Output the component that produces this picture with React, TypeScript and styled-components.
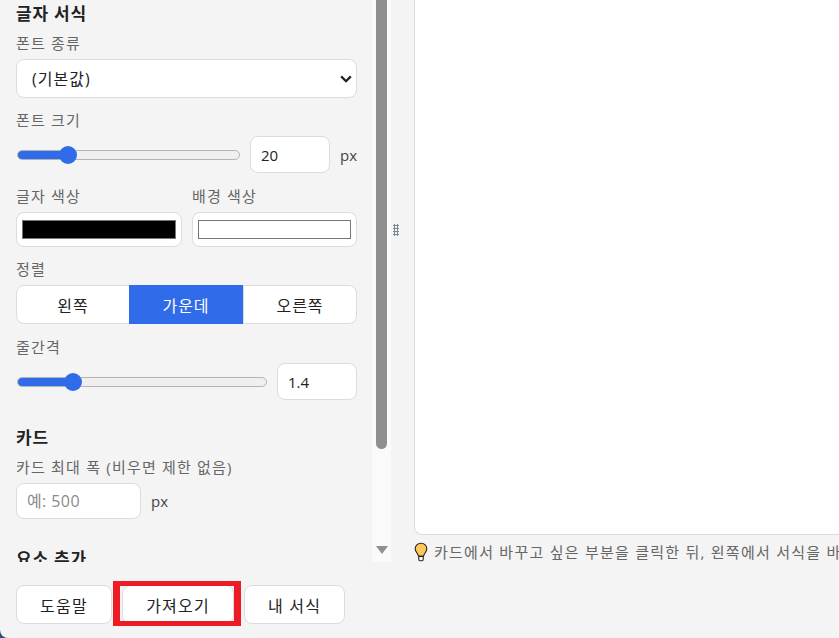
import styled, { createGlobalStyle } from 'styled-components';

const GlobalStyle = createGlobalStyle`
	html, body, #root {
		height: 100%;
		margin: 0;
	}

	body {
		overflow: hidden;
		background: #2d5078;
		color: #222;
		font-family: "Open Sans", "Noto Sans CJK KR", sans-serif;
		font-size: 15px;
	}

	* {
		box-sizing: border-box;
	}
`;

const Page = styled.div`
	display: flex;
	height: 638px;
	width: 839px;
	overflow: hidden;
	background: #f4f4f4;
	border-bottom-left-radius: 8px;
`;

const Sidebar = styled.aside`
	flex: 0 0 391px;
	display: flex;
	flex-direction: column;
`;

const ScrollArea = styled.div`
	flex: 0 0 562px;
	display: flex;
	overflow: hidden;
`;

const Panel = styled.div`
	flex: 1;
	min-width: 0;
	padding: 4px 15px 0 16px;
	overflow: hidden;
`;

const Track = styled.div`
	flex: 0 0 19px;
	display: flex;
	flex-direction: column;
	justify-content: space-between;
	align-items: center;
	background: #fafafa;
	padding-bottom: 8px;
`;

const Thumb = styled.div`
	width: 11px;
	height: 449px;
	background: #8f8f8f;
	border-radius: 0 0 6px 6px;
`;

const ArrowDown = styled.div`
	width: 0;
	height: 0;
	border-left: 6.5px solid transparent;
	border-right: 6.5px solid transparent;
	border-top: 8px solid #8f8f8f;
`;

const SectionTitle = styled.h3`
	margin: 0;
	font-size: 17px;
	line-height: 20px;
	font-weight: 700;
	letter-spacing: 0.8px;
	color: #222;
`;

const Field = styled.div<{ $top?: number }>`
	margin-top: ${(props) => props.$top ?? 12}px;
`;

const Label = styled.label`
	display: block;
	font-size: 15px;
	line-height: 20px;
	letter-spacing: 1.2px;
	color: #666;
	margin-bottom: 6px;
`;

const SelectWrap = styled.div`
	position: relative;

	svg {
		position: absolute;
		top: 16px;
		right: 5px;
		pointer-events: none;
	}
`;

const Select = styled.select`
	display: block;
	width: 100%;
	height: 39px;
	padding: 0 15px;
	appearance: none;
	border: 1px solid #dcdcdc;
	border-radius: 8px;
	background: #fff;
	color: #222;
	font: inherit;
	font-size: 16px;
	letter-spacing: 1px;
`;

const Row = styled.div<{ $gap?: number }>`
	display: flex;
	align-items: center;
	gap: ${(props) => props.$gap ?? 10}px;
`;

const Range = styled.input<{ $fill: number }>`
	flex: 1;
	min-width: 0;
	height: 18px;
	margin: 0 0 0 1px;
	appearance: none;
	background: transparent;

	&::-webkit-slider-runnable-track {
		height: 10px;
		border-radius: 5px;
		border: 1px solid #b4b4b4;
		background: linear-gradient(
			to right,
			#306cea ${(props) => props.$fill}px,
			#efefef ${(props) => props.$fill}px
		);
	}

	&::-webkit-slider-thumb {
		appearance: none;
		width: 18px;
		height: 18px;
		margin-top: -5px;
		border-radius: 50%;
		background: #306cea;
		border: 0;
	}
`;

const NumberInput = styled.input<{ $width: number; $height?: number }>`
	flex: 0 0 ${(props) => props.$width}px;
	width: ${(props) => props.$width}px;
	height: ${(props) => props.$height ?? 37}px;
	padding: 0 10px;
	border: 1px solid #dcdcdc;
	border-radius: 8px;
	background: #fff;
	color: #222;
	font: inherit;
	font-size: 15px;

	&::placeholder {
		color: #8a8a8a;
		font-size: 16px;
		letter-spacing: 0.4px;
	}
`;

const Unit = styled.span`
	font-size: 15px;
	color: #444;
`;

const ColorGrid = styled.div`
	display: grid;
	grid-template-columns: 166px 165px;
	gap: 10px;
	margin-top: 13px;
`;

const ColorBox = styled.div`
	height: 35px;
	padding: 7px 5px;
	border: 1px solid #dcdcdc;
	border-radius: 8px;
	background: #fff;
`;

const ColorSwatch = styled.div<{ $color: string }>`
	height: 19px;
	border: 1px solid #767676;
	background: ${(props) => props.$color};
`;

const Segments = styled.div`
	display: flex;
	height: 39px;
	border: 1px solid #dcdcdc;
	border-radius: 8px;
	background: #fff;
`;

const Segment = styled.button<{ $active?: boolean; $width: number }>`
	flex: ${(props) => (props.$width ? `0 0 ${props.$width}px` : '1')};
	margin: ${(props) => (props.$active ? '-1px 0' : '0')};
	padding: 0;
	border: 0;
	border-right: ${(props) => (props.$active ? '1px solid #dcdcdc' : '0')};
	background: ${(props) => (props.$active ? '#306cea' : 'transparent')};
	color: ${(props) => (props.$active ? '#fff' : '#222')};
	font: inherit;
	font-size: 16px;
	letter-spacing: 1px;
`;

const Section = styled.section<{ $top: number }>`
	margin-top: ${(props) => props.$top}px;
`;

const Footer = styled.footer`
	display: flex;
	align-items: flex-start;
	padding: 23px 0 0 16px;
`;

const FooterButton = styled.button<{ $width: number; $left?: number }>`
	width: ${(props) => props.$width}px;
	height: 39px;
	margin-left: ${(props) => props.$left ?? 0}px;
	border: 1px solid #dcdcdc;
	border-radius: 8px;
	background: #fff;
	color: #222;
	font: inherit;
	font-size: 16px;
	letter-spacing: 1.2px;
	padding: 0;
`;

const Highlighted = styled.div`
	position: relative;
	margin-left: 10px;

	&::after {
		content: '';
		position: absolute;
		inset: -4px -7px -2px -9px;
		border: solid #ed1c24;
		border-width: 5px 7px;
		pointer-events: none;
	}
`;

const Divider = styled.div`
	flex: 0 0 23px;
	display: flex;
	padding: 224px 0 0 2px;
`;

const Grip = styled.div`
	width: 6px;
	height: 12px;
	background-image: radial-gradient(circle, #7d8794 1px, transparent 1.1px);
	background-size: 3px 3px;
`;

const Main = styled.main`
	flex: 1;
	min-width: 0;
	display: flex;
	flex-direction: column;
`;

const Card = styled.div`
	flex: 0 0 535px;
	margin-right: -20px;
	border: 1px solid #dcdcdc;
	border-top: 0;
	border-right: 0;
	border-radius: 0 0 0 8px;
	background: #fff;
`;

const Hint = styled.p`
	display: flex;
	align-items: center;
	gap: 6px;
	margin: 7px 0 0;
	font-size: 15px;
	line-height: 20px;
	letter-spacing: 1.25px;
	color: #666;
	white-space: nowrap;

	svg {
		flex-shrink: 0;
	}
`;

const BulbIcon = () => (
	<svg width='14' height='20' viewBox='0 0 14 20' fill='none'>
		<path
			d='M7 1.2C3.6 1.2 1.2 3.7 1.2 6.8c0 2.3 1.4 3.6 2.4 5.2.5.8.7 1.5.8 2.2h5.2c.1-.7.3-1.4.8-2.2 1-1.6 2.4-2.9 2.4-5.2C12.8 3.7 10.4 1.2 7 1.2z'
			fill='#fdc75b'
			stroke='#222'
			strokeWidth='1.1'
		/>
		<path d='M4.8 14.4h4.4v3.2c0 .7-.6 1.2-1.2 1.2H6c-.6 0-1.2-.5-1.2-1.2z' fill='#fff' stroke='#222' strokeWidth='1.1' />
	</svg>
);

const ChevronIcon = () => (
	<svg width='12' height='8' viewBox='0 0 12 8' fill='none'>
		<path d='M1.2 1.4 6 6.2l4.8-4.8' stroke='#222' strokeWidth='2.3' />
	</svg>
);

const App = () => {
	return (
		<>
			<GlobalStyle />
			<Page>
				<Sidebar>
					<ScrollArea>
						<Panel>
							<SectionTitle>글자 서식</SectionTitle>
							<Field $top={9}>
								<Label>폰트 종류</Label>
								<SelectWrap>
									<Select defaultValue='default'>
										<option value='default'>(기본값)</option>
									</Select>
									<ChevronIcon />
								</SelectWrap>
							</Field>
							<Field>
								<Label>폰트 크기</Label>
								<Row>
									<Range type='range' min={10} max={60} defaultValue={20} $fill={50} />
									<NumberInput type='text' defaultValue='20' $width={80} />
									<Unit>px</Unit>
								</Row>
							</Field>
							<ColorGrid>
								<div>
									<Label>글자 색상</Label>
									<ColorBox><ColorSwatch $color='#000' /></ColorBox>
								</div>
								<div>
									<Label>배경 색상</Label>
									<ColorBox><ColorSwatch $color='#fff' /></ColorBox>
								</div>
							</ColorGrid>
							<Field>
								<Label>정렬</Label>
								<Segments>
									<Segment type='button' $width={112}>왼쪽</Segment>
									<Segment type='button' $width={115} $active>가운데</Segment>
									<Segment type='button' $width={0}>오른쪽</Segment>
								</Segments>
							</Field>
							<Field $top={13}>
								<Label>줄간격</Label>
								<Row>
									<Range type='range' min={1} max={3} step={0.1} defaultValue={1.4} $fill={55} />
									<NumberInput type='text' defaultValue='1.4' $width={80} />
								</Row>
							</Field>
							<Section $top={28}>
								<SectionTitle>카드</SectionTitle>
								<Field $top={9}>
									<Label>카드 최대 폭 (비우면 제한 없음)</Label>
									<Row>
										<NumberInput type='text' placeholder='예: 500' $width={125} $height={36} />
										<Unit>px</Unit>
									</Row>
								</Field>
							</Section>
							<Section $top={30}>
								<SectionTitle>요소 추가</SectionTitle>
							</Section>
						</Panel>
						<Track>
							<Thumb />
							<ArrowDown />
						</Track>
					</ScrollArea>
					<Footer>
						<FooterButton type='button' $width={96}>도움말</FooterButton>
						<Highlighted>
							<FooterButton type='button' $width={112}>가져오기</FooterButton>
						</Highlighted>
						<FooterButton type='button' $width={101} $left={10}>내 서식</FooterButton>
					</Footer>
				</Sidebar>
				<Divider><Grip /></Divider>
				<Main>
					<Card />
					<Hint>
						<BulbIcon />
						카드에서 바꾸고 싶은 부분을 클릭한 뒤, 왼쪽에서 서식을 바꾸세요.
					</Hint>
				</Main>
			</Page>
		</>
	);
};

export default App;
